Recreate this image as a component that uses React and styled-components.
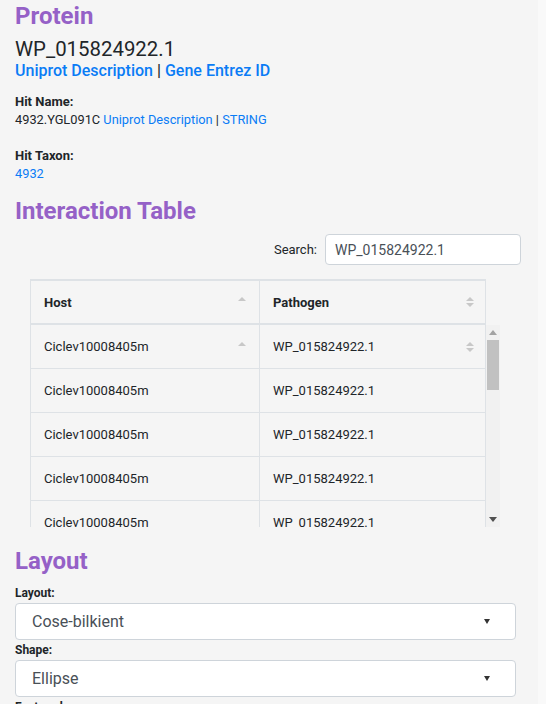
import React from "react";
import styled, { createGlobalStyle } from "styled-components";

const Global = createGlobalStyle`
  html, body {
    margin: 0;
    padding: 0;
    background: #f9f9f9;
    font-family: Roboto, "Liberation Sans", Arial, sans-serif;
    color: #212529;
  }
  * { box-sizing: border-box; }
`;

const Page = styled.div`
  width: 538px;
  min-height: 704px;
  background: #f5f5f5;
  padding: 0 15px;
  overflow: hidden;
`;

const Heading = styled.h2`
  margin: 0;
  padding-top: ${p => p.$top || 0}px;
  font-size: 24px;
  line-height: 32px;
  font-weight: 700;
  color: #9561c7;
`;

const Accession = styled.div`
  font-size: 20.4px;
  line-height: 24px;
  margin-top: 5px;
`;

const Link = styled.a`
  color: #0a7cf5;
  text-decoration: none;
`;

const BigLinks = styled.div`
  font-size: 16px;
  line-height: 20px;
  font-weight: 500;
`;

const Label = styled.div`
  font-size: ${p => p.$size || 12}px;
  font-weight: 700;
  line-height: 14px;
  margin-top: ${p => p.$top || 0}px;
`;

const Small = styled.div`
  font-size: 12.8px;
  line-height: 14px;
  margin-top: 4px;
`;

const SearchRow = styled.div`
  display: flex;
  justify-content: flex-end;
  align-items: center;
  gap: 8px;
  margin-top: 7px;
  padding-right: 2px;
  font-size: 13px;
`;

const SearchInput = styled.div`
  width: 196px;
  height: 31px;
  background: #fff;
  border: 1px solid #ced4da;
  border-radius: 4px;
  padding: 0 9px;
  display: flex;
  align-items: center;
  font-size: 14px;
  color: #495057;
`;

const TableWrap = styled.div`
  width: 470px;
  margin: 14px 0 0 15px;
`;

const HeadRow = styled.div`
  display: grid;
  grid-template-columns: 228px 228px;
  width: 456px;
  border: 1px solid #dee2e6;
  border-top-width: 2px;
  border-bottom: 2px solid #dee2e6;
  height: 46px;
`;

const Body = styled.div`
  display: flex;
  height: 202px;
  width: 470px;
`;

const Rows = styled.div`
  width: 456px;
  overflow: hidden;
`;

const ScrollTrack = styled.div`
  width: 14px;
  background: #f1f1f1;
  display: flex;
  flex-direction: column;
`;

const ScrollButton = styled.div`
  height: 15px;
  display: flex;
  align-items: center;
  justify-content: center;
`;

const Thumb = styled.div`
  height: 50px;
  margin: 0 1px;
  background: #c1c1c1;
`;

const TrackFill = styled.div`
  flex: 1;
`;

const Row = styled.div`
  display: grid;
  grid-template-columns: 228px 228px;
  border-left: 1px solid #dee2e6;
  border-right: 1px solid #dee2e6;
  border-bottom: 1px solid #dee2e6;
  height: 44px;
`;

const Cell = styled.div`
  display: flex;
  align-items: center;
  justify-content: space-between;
  padding: 0 12px 0 13px;
  font-size: 13px;
  font-weight: ${p => (p.$head ? 700 : 400)};
  border-left: ${p => (p.$first ? "none" : "1px solid #dee2e6")};
`;

const SelectBox = styled.div`
  height: 37px;
  margin-top: 3px;
  background: #fff;
  border: 1px solid #ced4da;
  border-radius: 4px;
  display: flex;
  align-items: center;
  justify-content: space-between;
  padding: 0 25px 0 16px;
  font-size: 16px;
  color: #495057;
  width: 501px;
`;

const SortIcon = ({ both }) => (
  <svg width="10" height="14" viewBox="0 0 10 14">
    <path d="M1 6 L5 2 L9 6 Z" fill="#c8c8c8" />
    {both && <path d="M1 8 L5 12 L9 8 Z" fill="#c8c8c8" />}
  </svg>
);

const Caret = () => (
  <svg width="6" height="5" viewBox="0 0 6 5">
    <path d="M0 0 L6 0 L3 5 Z" fill="#333" />
  </svg>
);

const Arrow = ({ down, color }) => (
  <svg width="8" height="5" viewBox="0 0 8 5">
    <path d={down ? "M0 0 L8 0 L4 5 Z" : "M0 5 L8 5 L4 0 Z"} fill={color} />
  </svg>
);

const rows = [0, 1, 2, 3, 4];

export default function App() {
  return (
    <Page>
      <Global />
      <Heading>Protein</Heading>
      <Accession>WP_015824922.1</Accession>
      <BigLinks>
        <Link>Uniprot Description</Link> | <Link>Gene Entrez ID</Link>
      </BigLinks>
      <Label $size={13} $top={14}>Hit Name:</Label>
      <Small>
        4932.YGL091C <Link>Uniprot Description</Link> | <Link>STRING</Link>
      </Small>
      <Label $size={13} $top={22}>Hit Taxon:</Label>
      <Small>
        <Link>4932</Link>
      </Small>
      <Heading $top={14}>Interaction Table</Heading>
      <SearchRow>
        <span>Search:</span>
        <SearchInput>WP_015824922.1</SearchInput>
      </SearchRow>
      <TableWrap>
        <HeadRow>
          <Cell $head $first>
            Host <SortIcon />
          </Cell>
          <Cell $head>
            Pathogen <SortIcon both />
          </Cell>
        </HeadRow>
        <Body>
          <Rows>
            {rows.map(i => (
              <Row key={i}>
                <Cell $first>
                  Ciclev10008405m {i === 0 && <SortIcon />}
                </Cell>
                <Cell>
                  WP_015824922.1 {i === 0 && <SortIcon both />}
                </Cell>
              </Row>
            ))}
          </Rows>
          <ScrollTrack>
            <ScrollButton>
              <Arrow color="#a3a3a3" />
            </ScrollButton>
            <Thumb />
            <TrackFill />
            <ScrollButton>
              <Arrow down color="#505050" />
            </ScrollButton>
          </ScrollTrack>
        </Body>
      </TableWrap>
      <Heading $top={18}>Layout</Heading>
      <Label $top={9}>Layout:</Label>
      <SelectBox>
        Cose-bilkient <Caret />
      </SelectBox>
      <Label $top={3}>Shape:</Label>
      <SelectBox>
        Ellipse <Caret />
      </SelectBox>
      <Label $top={3}>Featured:</Label>
    </Page>
  );
}
